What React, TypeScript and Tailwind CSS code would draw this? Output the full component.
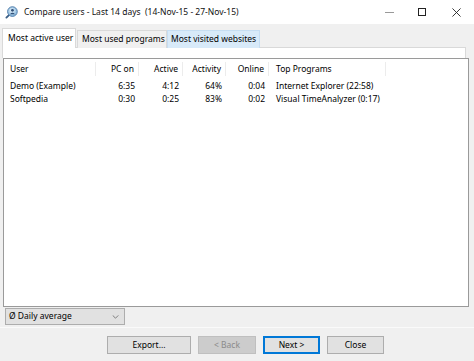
import React from "react";

const cols = [
  { key: "user", label: "User", w: 92, align: "left" },
  { key: "pc", label: "PC on", w: 43, align: "right" },
  { key: "active", label: "Active", w: 44, align: "right" },
  { key: "activity", label: "Activity", w: 43, align: "right" },
  { key: "online", label: "Online", w: 43, align: "right" },
  { key: "top", label: "Top Programs", w: 117, align: "left" },
];

const rows = [
  { user: "Demo (Example)", pc: "6:35", active: "4:12", activity: "64%", online: "0:04", top: "Internet Explorer (22:58)" },
  { user: "Softpedia", pc: "0:30", active: "0:25", activity: "83%", online: "0:02", top: "Visual TimeAnalyzer (0:17)" },
];

function AppIcon() {
  return (
    <svg width="13" height="13" viewBox="0 0 14 14">
      <defs>
        <radialGradient id="g" cx="0.45" cy="0.4" r="0.6">
          <stop offset="0" stopColor="#e8f3fb" />
          <stop offset="1" stopColor="#7fb2d9" />
        </radialGradient>
      </defs>
      <line x1="4" y1="10" x2="1.5" y2="12.5" stroke="#3a5e86" strokeWidth="2" strokeLinecap="round" />
      <circle cx="8" cy="6" r="5.2" fill="url(#g)" stroke="#4a78a8" strokeWidth="1" />
      <circle cx="8" cy="4.6" r="1.5" fill="#2f4f78" />
      <path d="M5.3 9 Q8 5.8 10.7 9 Z" fill="#2f4f78" />
    </svg>
  );
}

function padFor(i: number) {
  if (i === 0) return "pl-[6px] pr-[4px]";
  if (i === 5) return "pl-[7px] pr-[4px]";
  return "px-[4px]";
}

export default function App() {
  const font = { fontFamily: '"Noto Sans", "Open Sans", sans-serif' };
  return (
    <div className="w-[474px] h-[361px] bg-[#f0f0f0] flex flex-col overflow-hidden text-[8.5px] leading-none text-black whitespace-nowrap" style={font}>
      {/* Title bar */}
      <div className="h-[24px] bg-white flex items-center shrink-0">
        <div className="ml-[5px] mr-[6px] flex items-center"><AppIcon /></div>
        <div className="text-[8.5px] text-[#111] whitespace-pre">Compare users - Last 14 days  (14-Nov-15 - 27-Nov-15)</div>
        <div className="ml-auto flex items-center h-full">
          <div className="w-[34px] h-full flex items-center justify-center">
            <div className="w-[9px] h-px bg-[#999]" />
          </div>
          <div className="w-[32px] h-full flex items-center justify-center">
            <div className="w-[8px] h-[8px] border border-[#222]" />
          </div>
          <div className="w-[36px] h-full flex items-center justify-center">
            <svg width="9" height="9" viewBox="0 0 10 10"><path d="M0.5 0.5 L9.5 9.5 M9.5 0.5 L0.5 9.5" stroke="#222" strokeWidth="1" /></svg>
          </div>
        </div>
      </div>

      {/* Tabs */}
      <div className="flex items-end pl-[2px] mt-[4px] h-[20px] shrink-0 relative z-10">
        <div className="h-[20px] w-[74px] pl-[5px] bg-white border border-b-0 border-[#d9d9d9] flex items-center">Most active user</div>
        <div className="h-[18px] w-[90px] pl-[4px] ml-[1px] bg-[#f0f0f0] border border-b-0 border-[#d9d9d9] flex items-center">Most used programs</div>
        <div className="h-[18px] w-[93px] pl-[3px] bg-[#d8eaf9] border border-b-0 border-[#c5ddf2] flex items-center">Most visited websites</div>
      </div>

      {/* Panel */}
      <div className="mx-[2px] -mt-px border-t border-x border-[#d9d9d9] bg-white h-[11px] shrink-0 w-[464px]" />
      <div className="ml-[3px] w-[466px] h-[249px] bg-white border border-[#9a9a9a] shrink-0">
        <div className="flex pt-[3px] h-[17px] items-center">
          {cols.map((c, i) => (
            <div
              key={c.key}
              className={`h-full flex items-center ${padFor(i)} ${c.align === "right" ? "justify-end" : "justify-start"} border-r border-[#ececec]`}
              style={{ width: c.w }}
            >
              {c.label}
            </div>
          ))}
        </div>
        <div className="mt-[4px]">
          {rows.map((r, ri) => (
            <div key={ri} className="flex h-[13px] items-center">
              {cols.map((c, i) => (
                <div
                  key={c.key}
                  className={`${padFor(i)} ${c.align === "right" ? "text-right" : "text-left"}`}
                  style={{ width: c.w }}
                >
                  {(r as any)[c.key]}
                </div>
              ))}
            </div>
          ))}
        </div>
      </div>

      {/* Combo */}
      <div className="ml-[5px] mt-[1px] w-[120px] h-[17px] bg-[#e1e1e1] border border-[#adadad] flex items-center pl-[3px] pr-[5px] shrink-0">
        <span>Ø Daily average</span>
        <svg className="ml-auto" width="7" height="4" viewBox="0 0 8 5"><path d="M0.5 0.5 L4 4 L7.5 0.5" fill="none" stroke="#666" strokeWidth="1" /></svg>
      </div>
      <div className="mt-[2px] h-px bg-[#fafafa] shrink-0" />

      {/* Buttons */}
      <div className="flex mt-[8px] ml-[107px] gap-[7px] shrink-0">
        <div className="w-[84px] h-[18px] bg-[#e1e1e1] border border-[#adadad] flex items-center justify-center">Export...</div>
        <div className="w-[58px] h-[18px] bg-[#cccccc] border border-[#bfbfbf] text-[#8a8a8a] flex items-center justify-center">&lt; Back</div>
        <div className="w-[57px] h-[18px] bg-[#e1e1e1] border-2 border-[#0078d7] flex items-center justify-center">Next &gt;</div>
        <div className="w-[57px] h-[18px] bg-[#e1e1e1] border border-[#adadad] flex items-center justify-center">Close</div>
      </div>
    </div>
  );
}
